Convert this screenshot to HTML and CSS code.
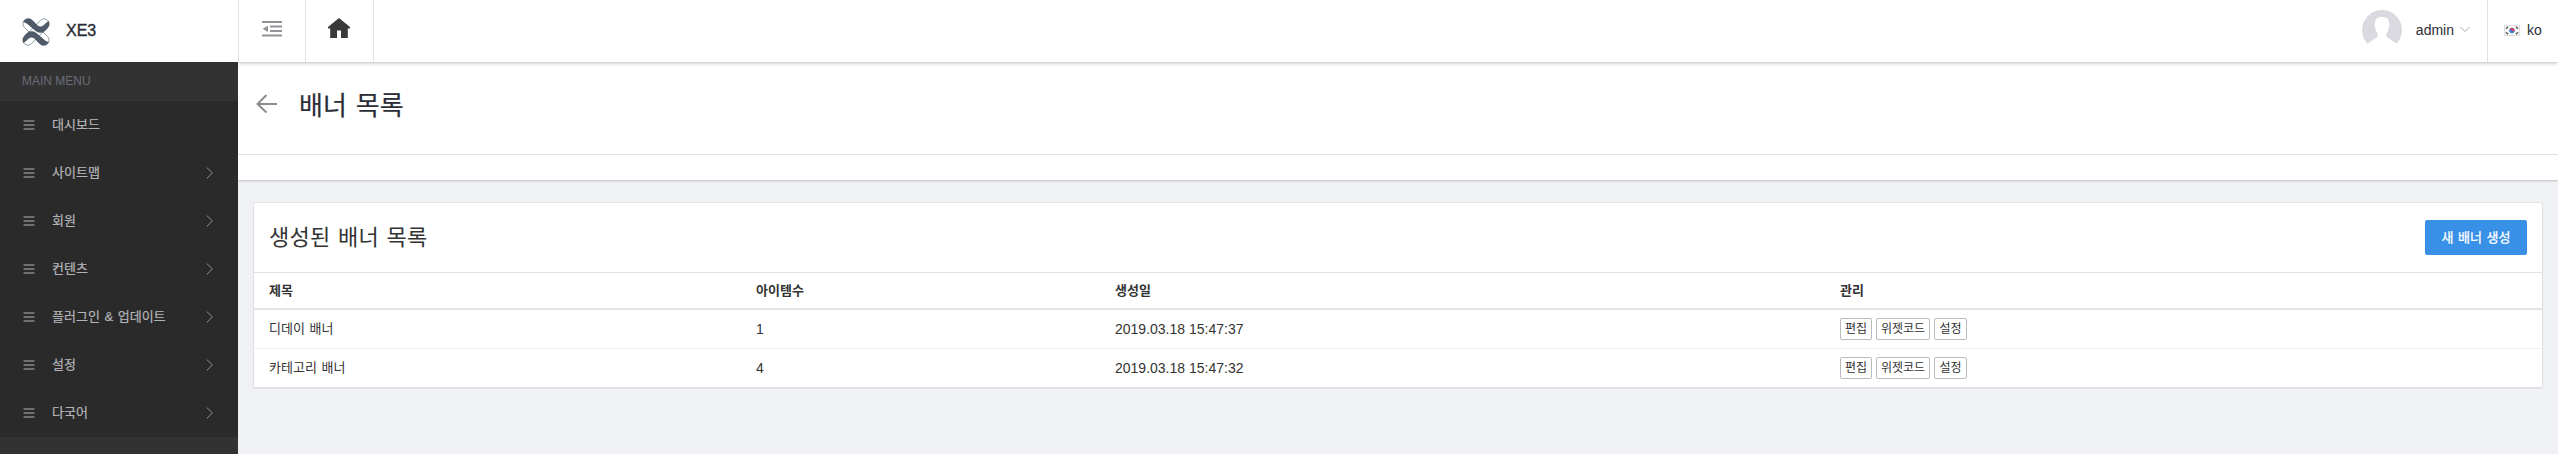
FILE: index.html
```html
<!DOCTYPE html>
<html lang="ko">
<head>
<meta charset="utf-8">
<title>XE3</title>
<link rel="stylesheet" href="styles.css">
</head>
<body>
<svg class="defs" width="0" height="0">
  <symbol id="bars" viewBox="0 0 12 10"><path d="M.500 1h11M.500 5h11M.500 9h11" fill="none" stroke="currentColor" stroke-width="1.100"/></symbol>
  <symbol id="chev" viewBox="0 0 8 12"><path d="M.8.6L6.400 6 .8 11.400" fill="none" stroke="currentColor" stroke-width="1"/></symbol>
</svg>
<div class="app">
  <aside class="sidebar">
    <div class="brand">
      <svg class="logo" viewBox="0 0 28 28">
        <g fill="#fff" stroke="#6d7683" stroke-width=".7">
          <rect x="-2.500" y="9" width="33" height="10" rx="5" transform="rotate(45 14 14)"/>
          <rect x="-2.500" y="9" width="33" height="10" rx="5" transform="rotate(-45 14 14)"/>
        </g>
        <g fill="#4f5a68">
          <path d="M1.200 4C2.500 .5 7 -.8 10.300 2L15.500 7.200Q18.500 10 21.500 7.200L26.500 2.800C28 6 27.200 9 24.500 11.500L23 13Q18.500 17 13.500 13L6 6.500Q4 4.500 1.200 4Z"/>
          <path transform="rotate(180 14 14)" d="M1.200 4C2.500 .5 7 -.8 10.300 2L15.500 7.200Q18.500 10 21.500 7.200L26.500 2.800C28 6 27.200 9 24.500 11.500L23 13Q18.500 17 13.500 13L6 6.500Q4 4.500 1.200 4Z"/>
        </g>
        <path d="M8 12.900Q11.500 12 14 14T20 15.100" fill="none" stroke="#fff" stroke-width=".6"/>
      </svg>
      <span class="brand-name">XE3</span>
    </div>
    <div class="menu-title">MAIN MENU</div>
    <nav class="menu">
      <a class="item"><svg class="bars"><use href="#bars"/></svg><span>대시보드</span></a>
      <a class="item"><svg class="bars"><use href="#bars"/></svg><span>사이트맵</span><svg class="chev"><use href="#chev"/></svg></a>
      <a class="item"><svg class="bars"><use href="#bars"/></svg><span>회원</span><svg class="chev"><use href="#chev"/></svg></a>
      <a class="item"><svg class="bars"><use href="#bars"/></svg><span>컨텐츠</span><svg class="chev"><use href="#chev"/></svg></a>
      <a class="item"><svg class="bars"><use href="#bars"/></svg><span>플러그인 &amp; 업데이트</span><svg class="chev"><use href="#chev"/></svg></a>
      <a class="item"><svg class="bars"><use href="#bars"/></svg><span>설정</span><svg class="chev"><use href="#chev"/></svg></a>
      <a class="item"><svg class="bars"><use href="#bars"/></svg><span>다국어</span><svg class="chev"><use href="#chev"/></svg></a>
    </nav>
  </aside>
  <div class="main">
    <header class="topbar">
      <div class="tool">
        <svg width="20" height="16" viewBox="0 0 20 16"><path d="M0 1h20M8 5.500h12M8 10h12M0 14.500h20" stroke="#929297" stroke-width="1.900"/><path d="M6 4.700v6.200L.6 7.800z" fill="#929297"/></svg>
      </div>
      <div class="tool">
        <svg class="home" width="22" height="20" viewBox="0 0 22 20"><path d="M11 0L0 9v1.500h2.200V20H9v-7.500h4V20h6.800v-9.500H22V9z" fill="#3a3a3a"/></svg>
      </div>
      <div class="user">
        <svg width="40" height="40" viewBox="0 0 40 40"><path d="M20 0A20 20 0 0 1 34.600 33.600L25 27.200C24 26.500 23.900 24 25 22.800C26.200 21.200 26.500 19 26.700 17.200C28 16 27.800 13.500 26.800 12.800C27 8.500 24.500 7 20 7S13 8.500 13.200 12.800C12.200 13.500 12 16 13.300 17.200C13.500 19 13.800 21.200 15 22.800C16.100 24 16 26.500 15 27.200L5.400 33.600A20 20 0 0 1 20 0Z" fill="#d9d9df"/></svg>
        <span class="user-name">admin</span>
        <svg class="caret" width="10" height="7" viewBox="0 0 10 7"><path d="M.5 1L5 5.500 9.500 1" fill="none" stroke="#aaa"/></svg>
      </div>
      <div class="lang">
        <svg width="16" height="11" viewBox="0 0 16 11"><rect x=".5" y=".5" width="15" height="10" fill="#fafafa" stroke="#dcdcdc"/><circle cx="8" cy="5.500" r="2.700" fill="#3b78d8"/><path d="M5.400 4.800a2.700 2.700 0 0 1 5.200 1.200Q9.200 6.800 8 5.500T5.400 4.800z" fill="#e83a45"/><path d="M2 3.700L4 1.800M12 1.800l2 1.900M2 7.300l2 1.900M12 9.200l2-1.900" stroke="#555" stroke-width="1.500"/></svg>
        <span>ko</span>
      </div>
    </header>
    <section class="page-head">
      <div class="page-title">
        <svg width="22" height="20" viewBox="0 0 22 20"><path d="M10.500 1L1.500 10l9 8.500M1.500 10H21" fill="none" stroke="#8b8b90" stroke-width="2"/></svg>
        <h1>배너 목록</h1>
      </div>
      <div class="page-strip"></div>
    </section>
    <section class="card">
      <div class="card-head">
        <h2>생성된 배너 목록</h2>
        <button class="create">새 배너 생성</button>
      </div>
      <div class="row head"><span>제목</span><span>아이템수</span><span>생성일</span><span>관리</span></div>
      <div class="row">
        <span>디데이 배너</span><span class="num">1</span><span class="num">2019.03.18 15:47:37</span>
        <span class="actions"><button class="wa">편집</button><button class="wb">위젯코드</button><button class="wc">설정</button></span>
      </div>
      <div class="row">
        <span>카테고리 배너</span><span class="num">4</span><span class="num">2019.03.18 15:47:32</span>
        <span class="actions"><button class="wa">편집</button><button class="wb">위젯코드</button><button class="wc">설정</button></span>
      </div>
    </section>
  </div>
</div>
</body>
</html>
```
FILE: styles.css
```css
* { box-sizing: border-box; }
body {
  margin: 0;
  background: #f0f1f5;
  color: #333;
  font: 13px/20px "Liberation Sans", "Noto Sans CJK KR", sans-serif;
  word-spacing: 1px;
}
svg { flex: none; display: block; }
.defs { position: absolute; }
h1, h2 { margin: 0; font-weight: 400; }
button { font-family: inherit; padding: 0; margin: 0; word-spacing: 1px; }
.app { display: flex; height: 454px; overflow: hidden; }
.sidebar { width: 238px; flex: none; background: #323232; }
.brand {
  height: 62px;
  display: flex;
  align-items: center;
  padding: 1px 0 0 22px;
  background: #fff;
}
.logo { width: 28px; height: 28px; }
.brand-name { margin: -2px 0 0 16px; font-size: 16px; color: #2c2e37; -webkit-text-stroke: .4px #2c2e37; }
.menu-title { height: 39px; padding-left: 22px; line-height: 39px; font-size: 12px; word-spacing: 0; color: #6a6c78; }
.menu { background: #2a2a2a; }
.item {
  height: 48px;
  display: flex;
  align-items: center;
  padding: 0 24px 0 23px;
  color: #b4b4b8;
  -webkit-text-stroke: .2px #b4b4b8;
}
.bars { width: 12px; height: 10px; margin: -1px 17px 0 0; }
.chev { width: 8px; height: 12px; margin-left: auto; color: #909090; }
.main { flex: 1; min-width: 0; overflow: hidden; }
.topbar {
  position: relative;
  height: 62px;
  display: flex;
  background: #fff;
  border-left: 1px solid #e1e1e3;
  box-shadow: 0 1px 4px rgba(0, 0, 0, .28);
}
.tool {
  width: 67px;
  display: flex;
  justify-content: center;
  align-items: center;
  padding-bottom: 4px;
  border-right: 1px solid #e1e1e3;
}
.tool + .tool { width: 68px; }
.home { margin: -2px 1px 0 0; }
.user {
  margin-left: auto;
  display: flex;
  align-items: center;
  padding: 0 17px 2px 0;
  font-size: 14px;
  color: #2c2e37;
}
.user-name { margin: -1px 0 0 14px; }
.caret { margin: -2px 0 0 6px; }
.lang {
  width: 71px;
  display: flex;
  align-items: center;
  gap: 7px;
  padding-left: 16px;
  padding-bottom: 2px;
  border-left: 1px solid #e1e1e3;
  font-size: 14px;
  color: #2c2e37;
}
.page-head { background: #fff; box-shadow: 0 1px 2px rgba(0, 0, 0, .2); }
.page-title {
  height: 93px;
  display: flex;
  align-items: center;
  padding: 0 0 8px 18px;
  border-bottom: 1px solid #e1e1e3;
}
.page-title h1 {
  margin: 4px 0 0 21px;
  font-size: 26px;
  line-height: 36px;
  color: #2c2e37;
  letter-spacing: .2px;
  -webkit-text-stroke: .2px #2c2e37;
}
.page-strip { height: 25px; }
.card {
  margin: 22px 15px 0;
  background: #fff;
  border: 1px solid #e1e1e3;
  border-radius: 2px;
  box-shadow: 0 1px 1px rgba(0, 0, 0, .06);
}
.card-head {
  height: 70px;
  display: flex;
  align-items: center;
  justify-content: space-between;
  padding: 0 15px;
  border-bottom: 1px solid #e1e1e3;
}
.card-head h2 { font-size: 22px; line-height: 30px; letter-spacing: .3px; }
.create {
  width: 102px;
  height: 35px;
  border: 0;
  border-radius: 2px;
  background: #3890e7;
  color: #fff;
  font-size: 13px;
  padding-bottom: 2px;
  -webkit-text-stroke: .3px #fff;
}
.row {
  height: 39px;
  display: grid;
  grid-template-columns: 487px 359px 725px 1fr;
  align-items: center;
  padding-left: 15px;
  border-bottom: 1px solid #f1f1f3;
}
.row:last-child { height: 38px; border-bottom: 0; }
.row.head { height: 37px; font-weight: 700; border-bottom: 2px solid #e3e3e5; }
.num { font-size: 14px; word-spacing: 0; }
.actions { display: flex; gap: 4px; }
.actions button {
  height: 22px;
  background: #fff;
  border: 1px solid #bbb;
  border-radius: 2px;
  color: #333;
  font-size: 12px;
  line-height: 18px;
}
.wa { width: 32px; }
.wb { width: 54px; }
.wc { width: 33px; }
```
